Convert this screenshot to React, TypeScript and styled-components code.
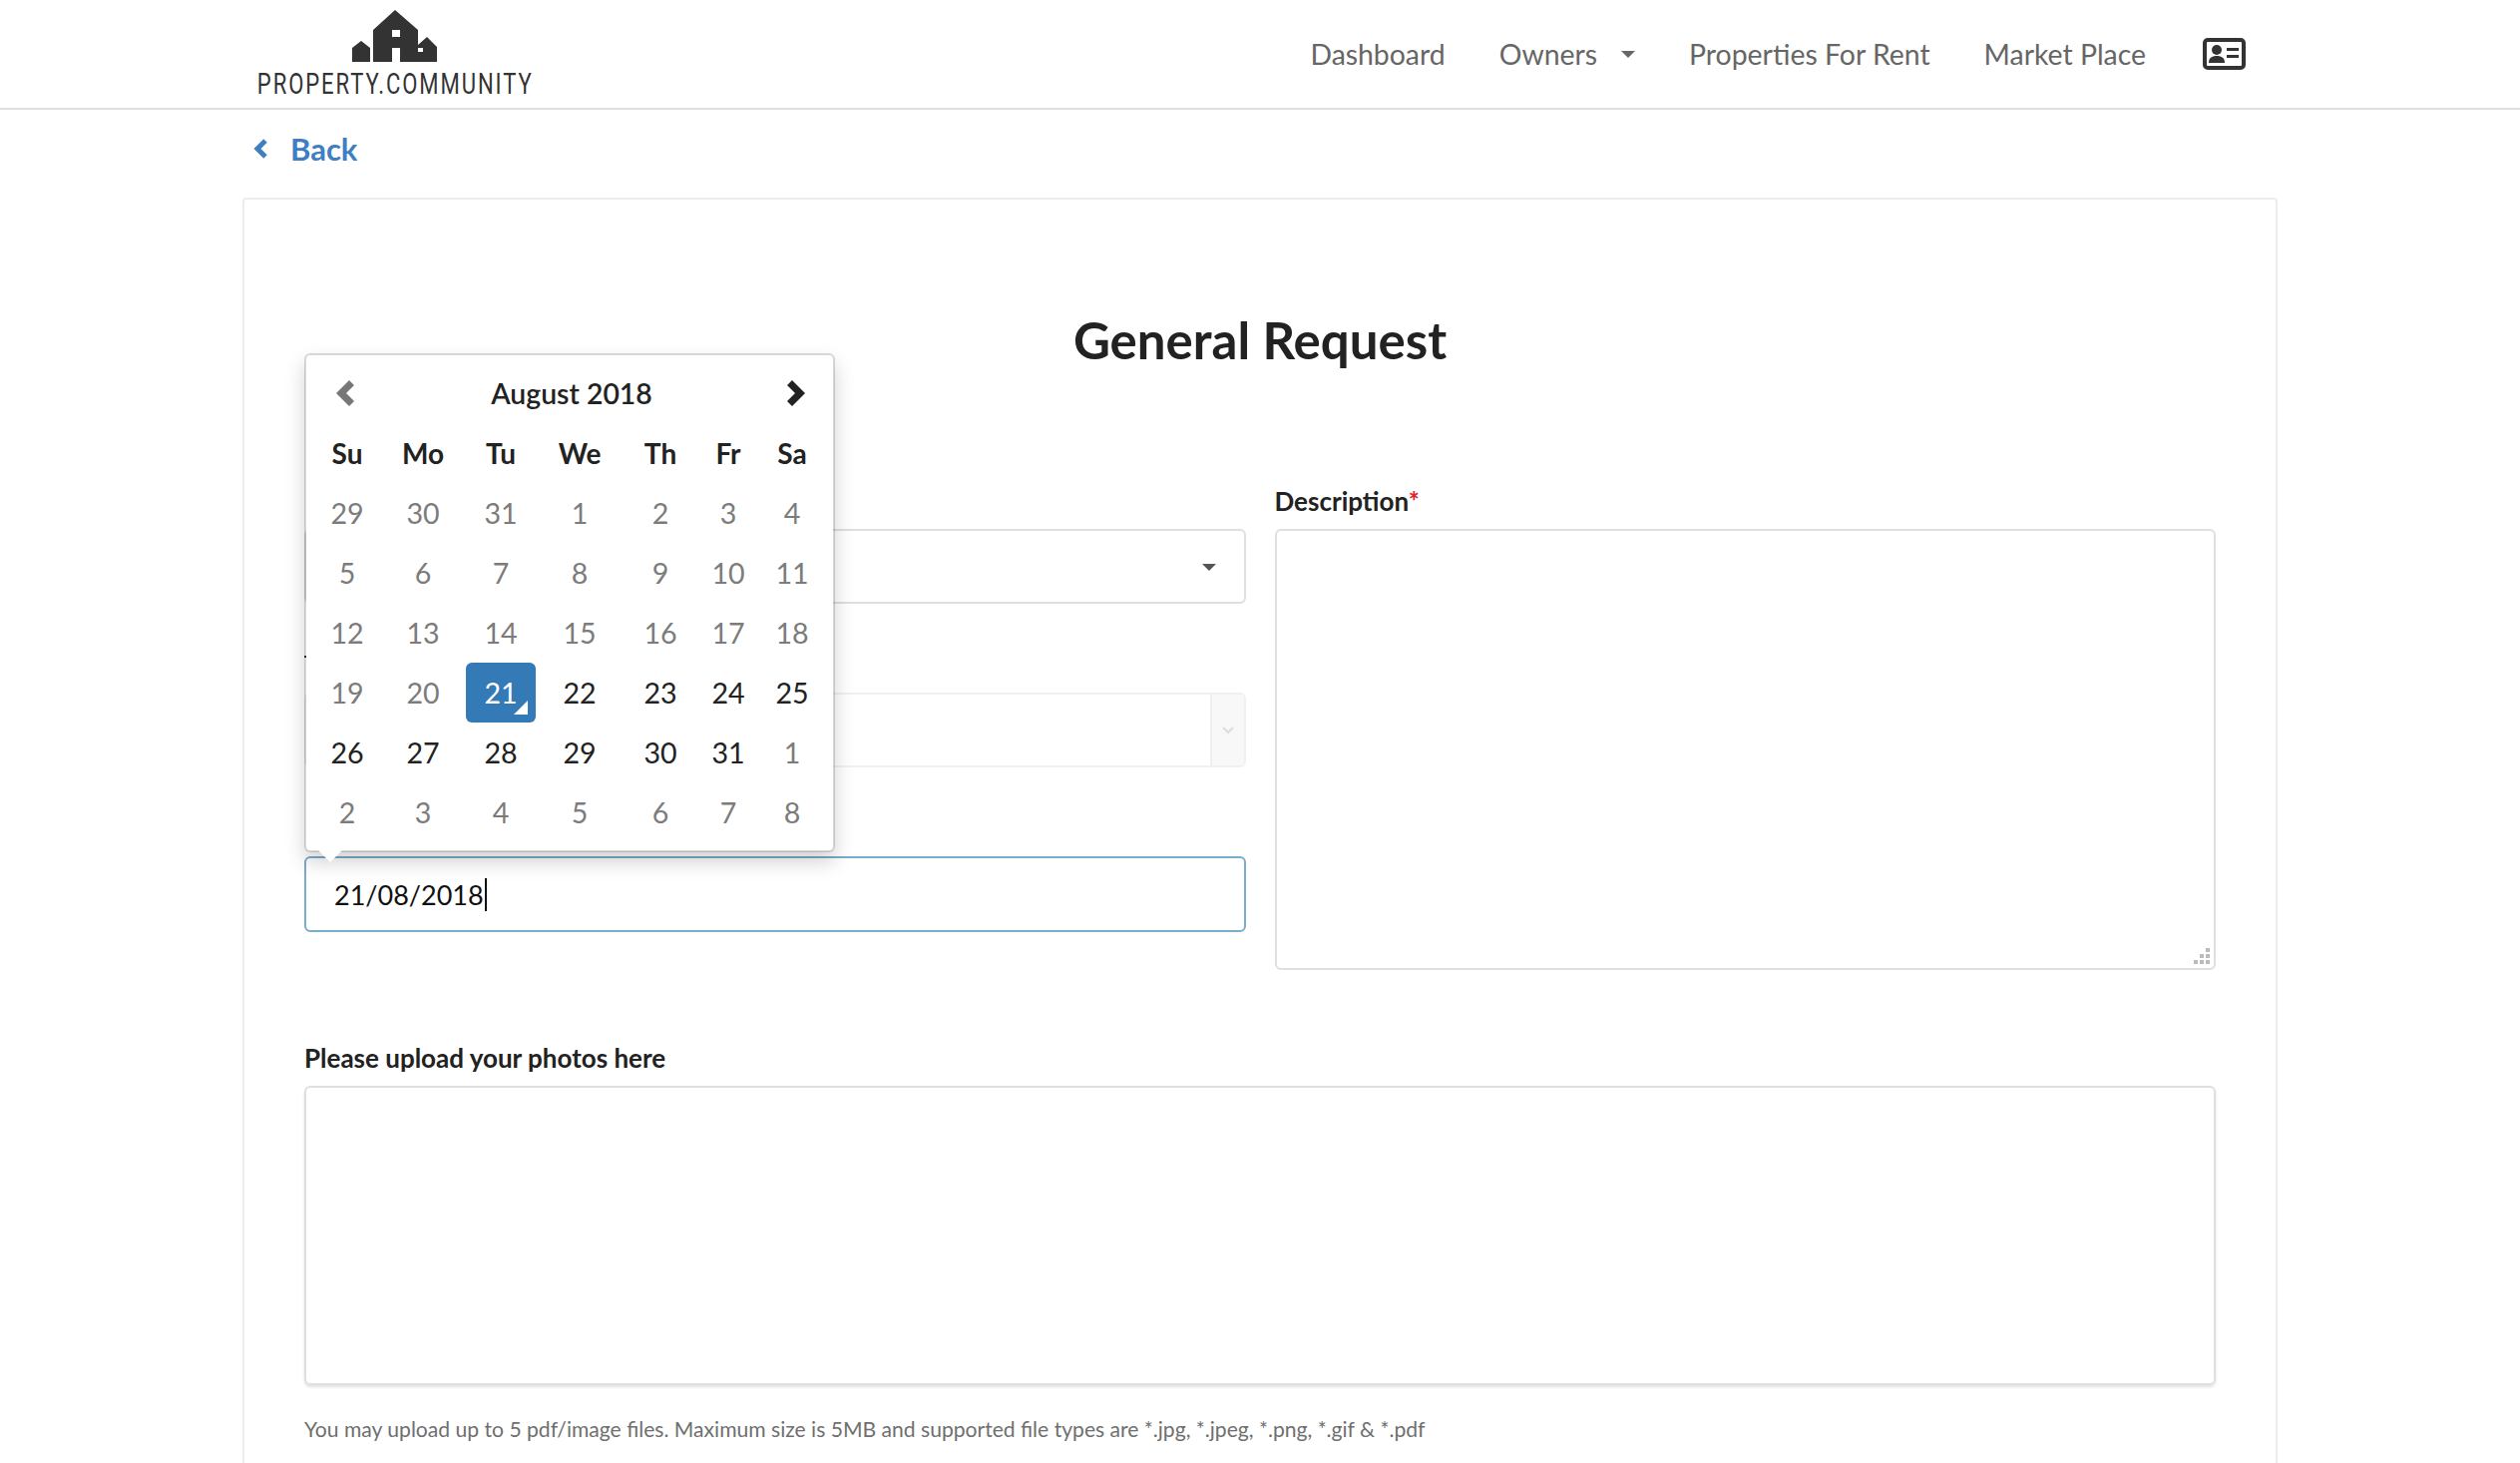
import React from "react";
import styled, { createGlobalStyle } from "styled-components";

const GlobalStyle = createGlobalStyle`
  html, body {
    margin: 0;
    padding: 0;
    background: #fff;
    font-family: "Lato", "Liberation Sans", sans-serif;
    color: #222;
  }
  * { box-sizing: border-box; }
`;

const Page = styled.div`
  width: 2526px;
  height: 1466px;
  overflow: hidden;
`;

const Header = styled.header`
  height: 110px;
  border-bottom: 2px solid #dedede;
  padding: 0 275px 0 256px;
  display: flex;
  align-items: flex-start;
  justify-content: space-between;
`;

const Logo = styled.div`
  width: 280px;
  padding-top: 10px;
  display: flex;
  flex-direction: column;
  align-items: center;
`;

const LogoText = styled.div`
  margin-top: 9px;
  font-family: "Roboto", sans-serif;
  font-size: 30px;
  line-height: 26px;
  letter-spacing: 2.6px;
  color: #333;
  white-space: nowrap;
  transform: scaleX(0.735);
`;

const Nav = styled.nav`
  height: 108px;
  display: flex;
  align-items: center;
  gap: 54px;
  font-size: 28.4px;
  color: #666;
`;

const NavItem = styled.a`
  display: flex;
  align-items: center;
  gap: 24px;
`;

const IconItem = styled(NavItem)`
  margin-left: 3px;
`;

const Caret = styled.span<{ $color: string; $size: number }>`
  display: block;
  border-left: ${({ $size }) => $size}px solid transparent;
  border-right: ${({ $size }) => $size}px solid transparent;
  border-top: ${({ $size }) => $size}px solid ${({ $color }) => $color};
`;

const BackLink = styled.a`
  height: 78px;
  margin-left: 254px;
  display: flex;
  align-items: center;
  gap: 23px;
  font-size: 31px;
  font-weight: 700;
  color: #3f7fc1;
`;

const Card = styled.section`
  position: relative;
  margin: 10px 243px 0;
  height: 1400px;
  border: 2px solid #ececec;
  border-radius: 4px;
  padding: 0 60px;
`;

const Title = styled.h1`
  margin: 0;
  padding-top: 110px;
  height: 285px;
  text-align: center;
  font-size: 51px;
  line-height: 62px;
  font-weight: 700;
  color: #222;
`;

const Columns = styled.div`
  display: grid;
  grid-template-columns: 1fr 1fr;
  column-gap: 29px;
`;

const Column = styled.div`
  display: flex;
  flex-direction: column;
`;

const Field = styled.div`
  height: 164px;
  display: flex;
  flex-direction: column;
`;

const Label = styled.label`
  display: block;
  height: 45px;
  padding-top: 1px;
  font-size: 26px;
  line-height: 32px;
  font-weight: 700;
  color: #222;
`;

// the label of this field is covered by the open picker, only its first stroke shows
const CoveredLabel = styled(Label)`
  position: relative;

  &::before {
    content: "";
    position: absolute;
    left: 0;
    top: 8px;
    width: 4px;
    height: 2px;
    background: #333;
  }
`;

const Required = styled.span`
  color: #d9232e;
`;

const SelectBox = styled.div`
  height: 75px;
  border: 2px solid #dfdfdf;
  border-radius: 6px;
  display: flex;
  align-items: center;
  justify-content: flex-end;
  padding: 2px 28px 0 0;
`;

const ComboBox = styled.div`
  height: 75px;
  border: 2px solid #f0f0f0;
  border-radius: 6px;
  display: flex;
  justify-content: flex-end;
`;

const ComboAddon = styled.div`
  width: 34px;
  background: #f8f8f8;
  border-left: 2px solid #efefef;
  display: flex;
  align-items: center;
  justify-content: center;
`;

const DateInput = styled.div`
  height: 76px;
  border: 2px solid #7aaccb;
  border-radius: 6px;
  display: flex;
  align-items: center;
  padding-left: 28px;
  font-size: 27px;
  color: #111;
`;

const Cursor = styled.span`
  display: block;
  width: 2px;
  height: 33px;
  margin-left: 1px;
  background: #111;
`;

const TextArea = styled.div`
  position: relative;
  height: 442px;
  border: 2px solid #dfdfdf;
  border-radius: 6px;
`;

const Grip = styled.svg`
  position: absolute;
  right: 2px;
  bottom: 2px;
`;

const UploadSection = styled.div`
  margin-top: 66px;
`;

const UploadLabel = styled(Label)`
  padding-top: 1px;
`;

const UploadBox = styled.div`
  height: 300px;
  border: 2px solid #dfdfdf;
  border-radius: 6px;
  box-shadow: 0 2px 3px rgba(0, 0, 0, 0.12);
`;

const HelpText = styled.p`
  margin: 29px 0 0;
  font-size: 21.1px;
  line-height: 30px;
  color: #6f6f6f;
`;

const Picker = styled.div`
  position: absolute;
  left: 60px;
  top: 154px;
  width: 532px;
  height: 500px;
  padding: 8px;
  background: #fff;
  border: 2px solid rgba(0, 0, 0, 0.15);
  border-radius: 6px;
  background-clip: padding-box;
  box-shadow: 0 10px 20px rgba(0, 0, 0, 0.175);

  &::before {
    content: "";
    position: absolute;
    left: 12px;
    bottom: -12px;
    border-left: 12px solid transparent;
    border-right: 12px solid transparent;
    border-top: 12px solid #fff;
  }
`;

const PickerHead = styled.div`
  display: grid;
  grid-template-columns: 62px 1fr 58px;
  height: 60px;
  padding-bottom: 1px;
  align-items: center;
  text-align: center;
`;

const MonthName = styled.div`
  font-size: 28.4px;
  font-weight: 600;
  color: #222;
`;

const ArrowCell = styled.div`
  display: flex;
  justify-content: center;
`;

const DayGrid = styled.div`
  display: grid;
  grid-template-columns: 66px 86px 70px 88px 74px 62px 66px;
  grid-auto-rows: 60px;
`;

const WeekDay = styled.div`
  display: flex;
  align-items: center;
  justify-content: center;
  font-size: 28px;
  font-weight: 700;
  color: #222;
`;

const Day = styled.div<{ $muted?: boolean; $active?: boolean }>`
  position: relative;
  display: flex;
  align-items: center;
  justify-content: center;
  font-size: 28.6px;
  border-radius: 6px;
  color: ${({ $muted, $active }) =>
    $active ? "#fff" : $muted ? "#7c7c7c" : "#222"};
  background: ${({ $active }) => ($active ? "#337ab7" : "transparent")};

  ${({ $active }) =>
    $active
      ? `&::after {
    content: "";
    position: absolute;
    right: 8px;
    bottom: 8px;
    border-left: 14px solid transparent;
    border-bottom: 14px solid #fff;
  }`
      : ""}
`;

const LogoMark = () => (
  <svg width="86" height="52" viewBox="0 0 86 52">
    <path
      fill="#333"
      fillRule="evenodd"
      d="M21 52V20L43 0 66 20V35L75 27 85 37V52H48V38H40V52ZM0 52V38L9 31 18 38V52ZM40 20V27H48V20ZM66 38V42H71V38Z"
    />
  </svg>
);

const ProfileIcon = () => (
  <svg width="43" height="32" viewBox="0 0 43 32">
    <rect x="2" y="2" width="39" height="28" rx="3" fill="#fff" stroke="#333" strokeWidth="4" />
    <circle cx="14" cy="12" r="5" fill="#333" />
    <path fill="#333" d="M6 25c0-5 3-7 8-7s8 2 8 7Z" />
    <path fill="#333" d="M24 10h12v3H24ZM24 17h12v3H24Z" />
  </svg>
);

const Chevron = ({ left, color }: { left?: boolean; color: string }) => (
  <svg width="18" height="26" viewBox="0 0 18 26">
    <path
      fill={color}
      d={
        left
          ? "M13 0l5 5-8 8 8 8-5 5L0 13Z"
          : "M5 0 0 5l8 8-8 8 5 5 13-13Z"
      }
    />
  </svg>
);

const weekDays = ["Su", "Mo", "Tu", "We", "Th", "Fr", "Sa"];

const days: { d: number; muted?: boolean; active?: boolean }[] = [
  ...[29, 30, 31, 1, 2, 3, 4, 5, 6, 7, 8, 9, 10, 11, 12, 13, 14, 15, 16, 17, 18, 19, 20].map((d) => ({ d, muted: true })),
  { d: 21, active: true },
  ...[22, 23, 24, 25, 26, 27, 28, 29, 30, 31].map((d) => ({ d })),
  ...[1, 2, 3, 4, 5, 6, 7, 8].map((d) => ({ d, muted: true })),
];

export default function App() {
  return (
    <Page>
      <GlobalStyle />
      <Header>
        <Logo>
          <LogoMark />
          <LogoText>PROPERTY.COMMUNITY</LogoText>
        </Logo>
        <Nav>
          <NavItem>Dashboard</NavItem>
          <NavItem>
            Owners <Caret $color="#666" $size={7} />
          </NavItem>
          <NavItem>Properties For Rent</NavItem>
          <NavItem>Market Place</NavItem>
          <IconItem>
            <ProfileIcon />
          </IconItem>
        </Nav>
      </Header>
      <BackLink>
        <svg width="14" height="20" viewBox="0 0 14 20">
          <path d="M12 2 4 10l8 8" fill="none" stroke="#3f7fc1" strokeWidth="5" />
        </svg>
        Back
      </BackLink>
      <Card>
        <Title>General Request</Title>
        <Columns>
          <Column>
            <Field>
              <Label />
              <SelectBox>
                <Caret $color="#555" $size={7} />
              </SelectBox>
            </Field>
            <Field>
              <CoveredLabel />
              <ComboBox>
                <ComboAddon>
                  <svg width="14" height="10" viewBox="0 0 14 10">
                    <path d="M2 2l5 5 5-5" fill="none" stroke="#ddd" strokeWidth="2" />
                  </svg>
                </ComboAddon>
              </ComboBox>
            </Field>
            <Field>
              <Label />
              <DateInput>
                21/08/2018
                <Cursor />
              </DateInput>
            </Field>
          </Column>
          <Column>
            <Label>
              Description<Required>*</Required>
            </Label>
            <TextArea>
              <Grip width="20" height="20" viewBox="0 0 20 20">
                <path
                  fill="#bbb"
                  d="M14 2h4v4h-4ZM8 8h4v4H8ZM14 8h4v4h-4ZM2 14h4v4H2ZM8 14h4v4H8ZM14 14h4v4h-4Z"
                />
              </Grip>
            </TextArea>
          </Column>
        </Columns>
        <UploadSection>
          <UploadLabel>Please upload your photos here</UploadLabel>
          <UploadBox />
          <HelpText>
            You may upload up to 5 pdf/image files. Maximum size is 5MB and supported file types are *.jpg, *.jpeg, *.png, *.gif &amp; *.pdf
          </HelpText>
        </UploadSection>
        <Picker>
          <PickerHead>
            <ArrowCell>
              <Chevron left color="#777" />
            </ArrowCell>
            <MonthName>August 2018</MonthName>
            <ArrowCell>
              <Chevron color="#222" />
            </ArrowCell>
          </PickerHead>
          <DayGrid>
            {weekDays.map((w) => (
              <WeekDay key={w}>{w}</WeekDay>
            ))}
            {days.map((c, i) => (
              <Day key={i} $muted={c.muted} $active={c.active}>
                {c.d}
              </Day>
            ))}
          </DayGrid>
        </Picker>
      </Card>
    </Page>
  );
}
